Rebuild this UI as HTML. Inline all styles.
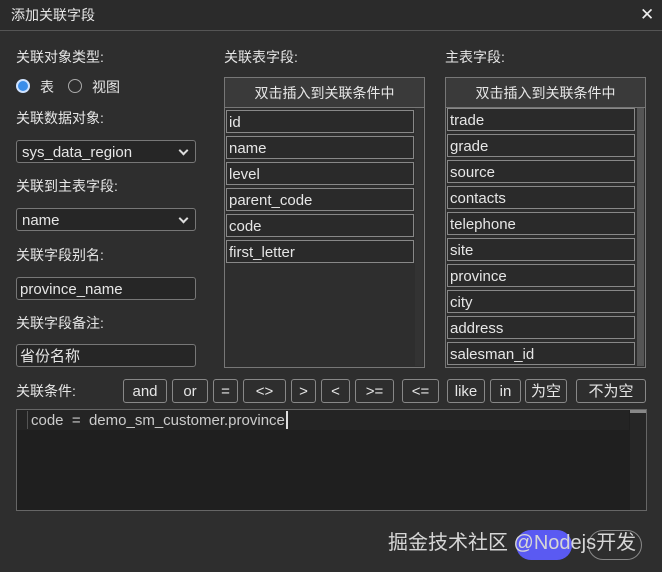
<!DOCTYPE html>
<html><head><meta charset="utf-8"><style>
*{box-sizing:border-box;margin:0;padding:0}
body{width:662px;height:572px;background:#2e2e2e;font-family:"Liberation Sans","Noto Sans CJK SC",sans-serif;color:#e6e6e6;position:relative;overflow:hidden;font-size:14px}
.a{position:absolute}
.title{left:0;top:0;width:662px;height:31px;background:#2b2b2b;border-bottom:1px solid #555;font-size:14px;line-height:31px;padding-left:11px}
.lbl{font-size:14px;line-height:18px}
.sel{background:#262626;border:1px solid #777;border-radius:3px;height:23px;width:180px;font-size:15px;line-height:23px;padding-left:5px}
.sel:after{content:"";position:absolute;right:8px;top:6px;width:5px;height:5px;border-right:2px solid #ddd;border-bottom:2px solid #ddd;transform:rotate(45deg)}
.inp{background:#262626;border:1px solid #777;border-radius:3px;height:23px;width:180px;font-size:15px;line-height:23px;padding-left:3px}
.box{border:1px solid #777;background:#2e2e2e}
.hdr{height:30px;border-bottom:1px solid #777;background:#3a3a3a;text-align:center;line-height:30px;font-size:14px}
.it{position:absolute;height:23px;border:1px solid #888;background:#2a2a2a;font-size:15px;line-height:24px;padding-left:2px}
.btn{position:absolute;top:379px;height:24px;border:1px solid #888;border-radius:3px;background:#2e2e2e;text-align:center;line-height:24px;font-size:15px}
.radio{width:14px;height:14px;border-radius:50%;border:1px solid #aaa}
</style></head><body>
<div class="a title">添加关联字段</div>
<div class="a" style="left:640px;top:5px;font-size:17px;color:#eee">✕</div>

<div class="a lbl" style="left:16px;top:48px">关联对象类型:</div>
<div class="a radio" style="left:16px;top:79px;background:#3b8eea;border:2px solid #cfe3ff"></div>
<div class="a lbl" style="left:40px;top:78px">表</div>
<div class="a radio" style="left:68px;top:79px"></div>
<div class="a lbl" style="left:92px;top:78px">视图</div>
<div class="a lbl" style="left:16px;top:109px">关联数据对象:</div>
<div class="a sel" style="left:16px;top:140px">sys_data_region</div>
<div class="a lbl" style="left:16px;top:177px">关联到主表字段:</div>
<div class="a sel" style="left:16px;top:208px">name</div>
<div class="a lbl" style="left:16px;top:246px">关联字段别名:</div>
<div class="a inp" style="left:16px;top:277px">province_name</div>
<div class="a lbl" style="left:16px;top:314px">关联字段备注:</div>
<div class="a inp" style="left:16px;top:344px">省份名称</div>

<div class="a lbl" style="left:224px;top:48px">关联表字段:</div>
<div class="a box" style="left:224px;top:77px;width:201px;height:291px"><div class="hdr">双击插入到关联条件中</div></div>
<div class="a" style="left:415px;top:108px;width:8px;height:258px;background:#333"></div>
<div class="it" style="left:226px;top:110px;width:188px">id</div>
<div class="it" style="left:226px;top:136px;width:188px">name</div>
<div class="it" style="left:226px;top:162px;width:188px">level</div>
<div class="it" style="left:226px;top:188px;width:188px">parent_code</div>
<div class="it" style="left:226px;top:214px;width:188px">code</div>
<div class="it" style="left:226px;top:240px;width:188px">first_letter</div>

<div class="a lbl" style="left:445px;top:48px">主表字段:</div>
<div class="a box" style="left:445px;top:77px;width:201px;height:291px"><div class="hdr">双击插入到关联条件中</div></div>
<div class="a" style="left:637px;top:108px;width:7px;height:258px;background:#555"></div>
<div class="it" style="left:447px;top:108px;width:188px">trade</div>
<div class="it" style="left:447px;top:134px;width:188px">grade</div>
<div class="it" style="left:447px;top:160px;width:188px">source</div>
<div class="it" style="left:447px;top:186px;width:188px">contacts</div>
<div class="it" style="left:447px;top:212px;width:188px">telephone</div>
<div class="it" style="left:447px;top:238px;width:188px">site</div>
<div class="it" style="left:447px;top:264px;width:188px">province</div>
<div class="it" style="left:447px;top:290px;width:188px">city</div>
<div class="it" style="left:447px;top:316px;width:188px">address</div>
<div class="it" style="left:447px;top:342px;width:188px">salesman_id</div>

<div class="a lbl" style="left:16px;top:382px">关联条件:</div>
<div class="btn" style="left:123px;width:44px">and</div>
<div class="btn" style="left:172px;width:36px">or</div>
<div class="btn" style="left:213px;width:25px">=</div>
<div class="btn" style="left:243px;width:43px">&lt;&gt;</div>
<div class="btn" style="left:291px;width:25px">&gt;</div>
<div class="btn" style="left:321px;width:29px">&lt;</div>
<div class="btn" style="left:355px;width:39px">&gt;=</div>
<div class="btn" style="left:402px;width:37px">&lt;=</div>
<div class="btn" style="left:447px;width:38px">like</div>
<div class="btn" style="left:490px;width:31px">in</div>
<div class="btn" style="left:525px;width:42px">为空</div>
<div class="btn" style="left:576px;width:70px">不为空</div>

<div class="a" style="left:16px;top:409px;width:631px;height:102px;background:#1f1f1f;border:1px solid #666"></div>
<div class="a" style="left:17px;top:410px;width:612px;height:20px;background:#242424"></div>
<div class="a" style="left:630px;top:410px;width:16px;height:100px;background:#262626"></div>
<div class="a" style="left:630px;top:410px;width:16px;height:3px;background:#888"></div>
<div class="a" style="left:27px;top:411px;width:1px;height:18px;background:#555"></div>
<div class="a" style="left:31px;top:412px;font-size:15px;line-height:18px;color:#ccc;white-space:pre">code  =  demo_sm_customer.province</div>
<div class="a" style="left:286px;top:411px;width:2px;height:18px;background:#ddd"></div>

<div class="a" style="left:516px;top:530px;width:56px;height:30px;border-radius:15px;background:#5a5af2"></div>
<div class="a" style="left:588px;top:530px;width:54px;height:30px;border-radius:15px;border:1px solid #888"></div>
<div class="a" style="left:388px;top:530px;font-size:20px;line-height:26px;color:#d6d6d6;white-space:nowrap">掘金技术社区 @Nodejs开发</div>
</body></html>
